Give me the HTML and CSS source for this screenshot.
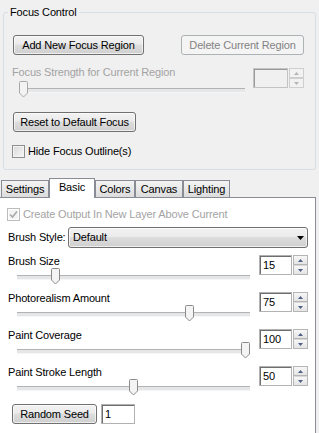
FILE: index.html
```html
<!DOCTYPE html>
<html>
<head>
<meta charset="utf-8">
<title>Focus Control</title>
<link rel="stylesheet" href="styles.css">
</head>
<body>
<fieldset class="group">
  <legend>Focus Control</legend>
  <div class="btn-row">
    <button class="btn w-add">Add New Focus Region</button>
    <button class="btn w-del" disabled>Delete Current Region</button>
  </div>
  <div class="srow focus-row">
    <div class="slabel dis">Focus Strength for Current Region</div>
    <div class="spin spin-g dis">
      <div class="spin-text"></div>
      <div class="spin-btns">
        <div class="sbtn"><svg width="5" height="3" viewBox="0 0 5 3"><path d="M0,3 L2.5,0 L5,3 Z"/></svg></div>
        <div class="sbtn"><svg width="5" height="3" viewBox="0 0 5 3"><path d="M0,0 L5,0 L2.5,3 Z"/></svg></div>
      </div>
    </div>
    <div class="slider slider-g dis">
      <svg class="thumb" style="left:0px" width="9" height="17" viewBox="0 0 9 17"><path d="M1.5,0.5 H7.5 Q8.5,0.5 8.5,1.5 V12 L4.5,16 L0.5,12 V1.5 Q0.5,0.5 1.5,0.5 Z"/></svg>
    </div>
  </div>
  <button class="btn w-reset">Reset to Default Focus</button>
  <div class="check check-g"><span class="cbox"></span><span>Hide Focus Outline(s)</span></div>
</fieldset>

<div class="tabs">
  <div class="tab t-settings">Settings</div>
  <div class="tab sel t-basic">Basic</div>
  <div class="tab t-colors">Colors</div>
  <div class="tab t-canvas">Canvas</div>
  <div class="tab t-lighting">Lighting</div>
</div>

<div class="panel">
  <div class="check check-p dis">
    <span class="cbox checked"><svg width="11" height="11" viewBox="0 0 11 11"><path d="M2,5.5 L4.5,8 L9,2.5"/></svg></span>
    <span>Create Output In New Layer Above Current</span>
  </div>
  <div class="style-row">
    <span>Brush Style:</span>
    <div class="combo"><span>Default</span><svg class="combo-arrow" width="7" height="4" viewBox="0 0 7 4"><path d="M0,0 H7 L3.5,4 Z"/></svg></div>
  </div>

  <div class="srow prow">
    <div class="slabel">Brush Size</div>
    <div class="spin spin-p">
      <div class="spin-text">15</div>
      <div class="spin-btns">
        <div class="sbtn"><svg width="5" height="3" viewBox="0 0 5 3"><path d="M0,3 L2.5,0 L5,3 Z"/></svg></div>
        <div class="sbtn"><svg width="5" height="3" viewBox="0 0 5 3"><path d="M0,0 L5,0 L2.5,3 Z"/></svg></div>
      </div>
    </div>
    <div class="slider slider-p">
      <svg class="thumb" style="left:34px" width="9" height="17" viewBox="0 0 9 17"><path d="M1.5,0.5 H7.5 Q8.5,0.5 8.5,1.5 V12 L4.5,16 L0.5,12 V1.5 Q0.5,0.5 1.5,0.5 Z"/></svg>
    </div>
  </div>

  <div class="srow prow">
    <div class="slabel">Photorealism Amount</div>
    <div class="spin spin-p">
      <div class="spin-text">75</div>
      <div class="spin-btns">
        <div class="sbtn"><svg width="5" height="3" viewBox="0 0 5 3"><path d="M0,3 L2.5,0 L5,3 Z"/></svg></div>
        <div class="sbtn"><svg width="5" height="3" viewBox="0 0 5 3"><path d="M0,0 L5,0 L2.5,3 Z"/></svg></div>
      </div>
    </div>
    <div class="slider slider-p">
      <svg class="thumb" style="left:168px" width="9" height="17" viewBox="0 0 9 17"><path d="M1.5,0.5 H7.5 Q8.5,0.5 8.5,1.5 V12 L4.5,16 L0.5,12 V1.5 Q0.5,0.5 1.5,0.5 Z"/></svg>
    </div>
  </div>

  <div class="srow prow">
    <div class="slabel">Paint Coverage</div>
    <div class="spin spin-p">
      <div class="spin-text">100</div>
      <div class="spin-btns">
        <div class="sbtn"><svg width="5" height="3" viewBox="0 0 5 3"><path d="M0,3 L2.5,0 L5,3 Z"/></svg></div>
        <div class="sbtn"><svg width="5" height="3" viewBox="0 0 5 3"><path d="M0,0 L5,0 L2.5,3 Z"/></svg></div>
      </div>
    </div>
    <div class="slider slider-p">
      <svg class="thumb" style="left:224px" width="9" height="17" viewBox="0 0 9 17"><path d="M1.5,0.5 H7.5 Q8.5,0.5 8.5,1.5 V12 L4.5,16 L0.5,12 V1.5 Q0.5,0.5 1.5,0.5 Z"/></svg>
    </div>
  </div>

  <div class="srow prow">
    <div class="slabel">Paint Stroke Length</div>
    <div class="spin spin-p">
      <div class="spin-text">50</div>
      <div class="spin-btns">
        <div class="sbtn"><svg width="5" height="3" viewBox="0 0 5 3"><path d="M0,3 L2.5,0 L5,3 Z"/></svg></div>
        <div class="sbtn"><svg width="5" height="3" viewBox="0 0 5 3"><path d="M0,0 L5,0 L2.5,3 Z"/></svg></div>
      </div>
    </div>
    <div class="slider slider-p">
      <svg class="thumb" style="left:112px" width="9" height="17" viewBox="0 0 9 17"><path d="M1.5,0.5 H7.5 Q8.5,0.5 8.5,1.5 V12 L4.5,16 L0.5,12 V1.5 Q0.5,0.5 1.5,0.5 Z"/></svg>
    </div>
  </div>

  <div class="seed-row">
    <button class="btn w-seed">Random Seed</button>
    <div class="textbox seed-box">1</div>
  </div>
</div>
</body>
</html>
```

FILE: styles.css
```css
* { box-sizing: border-box; }
html, body { margin: 0; padding: 0; }
body {
  width: 319px;
  height: 433px;
  overflow: hidden;
  background: #f0f0f0;
  font-family: "Liberation Sans", Arial, sans-serif;
  font-size: 11px;
  line-height: 13px;
  letter-spacing: -0.15px;
  color: #000;
  padding-top: 6px;
}

/* group box */
.group {
  margin: 0 3px;
  padding: 16px 11px 11px 9px;
  border: 1px solid #d5dfe5;
  border-radius: 3px;
  min-inline-size: 0;
}
.group legend {
  padding: 0 2px;
  margin-left: -5px;
  line-height: 13px;
}

.dis { color: #a3a3a3; }

/* buttons */
.btn {
  display: block;
  height: 20px;
  padding: 0;
  font: inherit;
  letter-spacing: inherit;
  line-height: 16px;
  color: #000;
  text-align: center;
  border: 1px solid #707070;
  border-radius: 3px;
  background: linear-gradient(#f2f2f2 0%, #ebebeb 45%, #dddddd 50%, #cfcfcf 100%);
  box-shadow: inset 0 0 0 1px rgba(255, 255, 255, 0.65);
}
.btn:disabled {
  color: #838383;
  border-color: #adb2b5;
  background: #f4f4f4;
  box-shadow: none;
}
.btn-row { display: flex; justify-content: space-between; height: 20px; }
.w-add { width: 131px; }
.w-del { width: 123px; }
.w-reset { width: 123px; margin-top: 14px; }
.w-seed { width: 85px; height: 20px; }

/* slider rows */
.srow {
  display: grid;
  grid-template-rows: 13px 17px;
}
.slabel { grid-column: 1; grid-row: 1; white-space: nowrap; }
.spin { grid-column: 2; grid-row: 1 / span 2; align-self: start; display: flex; gap: 1px; height: 20px; }
.slider { grid-column: 1; grid-row: 2; position: relative; height: 17px; }
.slider::before {
  content: "";
  display: block;
  margin-top: 7px;
  height: 3px;
  border-top: 1px solid #b3b3b3;
  background: #e4e6e8;
  border-bottom: 1px solid #f6f6f6;
}
.thumb { position: absolute; top: 0; }
.thumb path { fill: #f4f4f4; stroke: #8b8b8b; stroke-width: 1; }
.slider-g .thumb path { fill: #f3f3f3; stroke: #a9a9a9; }

.focus-row { margin-top: 11px; grid-template-columns: 1fr 51px; grid-template-rows: 15px 17px; }
.focus-row .slabel { margin-left: -1px; }
.slider-g { margin-left: 6px; width: 226px; }
.spin-g { margin-top: 2px; }
.spin-g .spin-text { width: 35px; }

.prow { grid-template-columns: 1fr 49px; margin-top: 7px; }
.slider-p { margin: 0 9px 0 9px; }
.spin-p .spin-text { width: 33px; }

.spin-text, .textbox {
  height: 20px;
  border: 1px solid #b2b2b2;
  box-shadow: inset 1px 1px 0 #6e6e6e;
  background: #fff;
  padding: 2px 0 0 3px;
  line-height: 15px;
}
.spin-g .spin-text { background: #f0f0f0; border-color: #c3c3c3; box-shadow: inset 1px 1px 0 #9a9a9a; }
.spin-btns { display: flex; flex-direction: column; width: 15px; height: 20px; }
.sbtn {
  height: 10px;
  border: 1px solid #b5b5b5;
  background: linear-gradient(#f7f7f7, #e4e4e4);
  display: flex;
  align-items: center;
  justify-content: center;
}
.sbtn + .sbtn { border-top: 1px solid #d8d8d8; }
.sbtn svg { display: block; }
.sbtn path { fill: #4d5f86; }
.spin-g .sbtn { border-color: #cfcfcf; background: #f2f2f2; }
.spin-g .sbtn path { fill: #b5b5b5; }

/* checkboxes */
.check { display: flex; align-items: center; gap: 3px; height: 13px; margin-left: -1px; white-space: nowrap; }
.check-g { margin-top: 13px; }
.cbox {
  width: 13px;
  height: 13px;
  flex: none;
  border: 1px solid #8e8f8f;
  background: linear-gradient(135deg, #d9d9d9, #f7f7f7);
  box-shadow: inset 0 0 0 1px #f4f4f4;
  display: flex;
  align-items: center;
  justify-content: center;
}
.cbox.checked { border-color: #bcbcbc; background: #f4f4f4; box-shadow: inset 0 0 0 1px #fff; }
.cbox svg path { fill: none; stroke: #a8a8a8; stroke-width: 1.6; }

/* tabs */
.tabs {
  display: flex;
  align-items: flex-end;
  height: 20px;
  margin-top: 8px;
  margin-bottom: -1px;
  padding-left: 1px;
  position: relative;
  z-index: 1;
}
.tab {
  height: 17px;
  margin-bottom: 1px;
  border: 1px solid #898c95;
  border-bottom: none;
  background: linear-gradient(#f3f3f3, #e6e6e6 60%, #dcdcdc);
  text-align: center;
  padding-top: 2px;
  white-space: nowrap;
}
.tab.sel {
  height: 20px;
  margin-bottom: 0;
  background: #fff;
}
.t-settings { width: 48px; }
.t-basic { width: 46px; }
.t-colors { width: 40px; }
.t-canvas { width: 48px; }
.t-lighting { width: 47px; }

/* panel */
.panel {
  width: 316px;
  height: 240px;
  background: #fff;
  border-top: 1px solid #898c95;
  border-right: 1px solid #898c95;
  padding: 10px 7px 0 8px;
}
.style-row { display: flex; align-items: center; height: 21px; margin-top: 6px; white-space: nowrap; }
.combo {
  margin-left: auto;
  width: 240px;
  height: 21px;
  border: 1px solid #707070;
  border-radius: 3px;
  background: linear-gradient(#f2f2f2 0%, #ebebeb 45%, #dddddd 50%, #cfcfcf 100%);
  box-shadow: inset 0 0 0 1px rgba(255, 255, 255, 0.65);
  display: flex;
  align-items: center;
  padding: 0 3px 0 4px;
}
.combo-arrow { margin-left: auto; display: block; }
.combo-arrow path { fill: #000; }

.seed-row { display: flex; align-items: center; gap: 4px; margin-top: 8px; margin-left: 4px; }
.seed-box { width: 34px; }
```
